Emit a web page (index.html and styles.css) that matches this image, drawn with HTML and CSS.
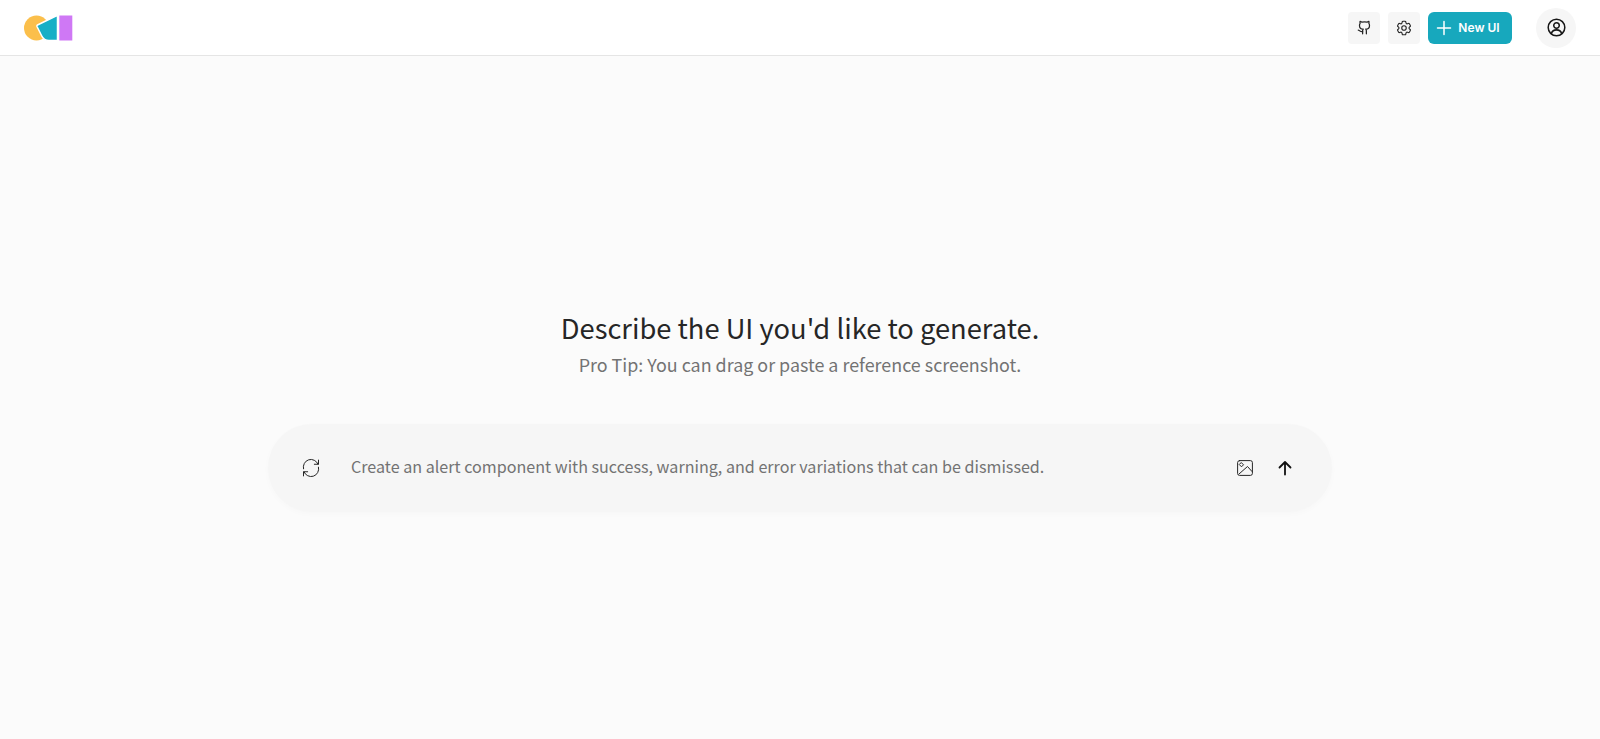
FILE: index.html
```html
<!DOCTYPE html>
<html lang="en">
<head>
  <meta charset="UTF-8">
  <meta name="viewport" content="width=device-width, initial-scale=1.0">
  <title>OpenUI</title>
  <link rel="stylesheet" href="styles.css">
</head>
<body>
  <!-- Header -->
  <header class="header">
    <svg class="logo" width="51" height="26" viewBox="0 0 51 26">
      <circle class="logo-circle" cx="14.500" cy="13" r="12.500"/>
      <path class="logo-wedge" d="M15.500 10 34.500 0.800Q35.500 0.400 35.500 1.500V25.500H27Q22 25.500 19.500 20.500L15 11.500Q14.700 10.500 15.500 10Z"/>
      <rect class="logo-bar" x="37.300" y="0.500" width="13" height="25"/>
    </svg>
    <div class="header-actions">
      <button class="icon-btn" aria-label="GitHub">
        <svg width="15" height="15" viewBox="0 0 24 24" fill="none" stroke="currentColor" stroke-width="2" stroke-linecap="round" stroke-linejoin="round">
          <path d="M15 22v-4a4.800 4.800 0 0 0-1-3.500c3 0 6-2 6-5.500.08-1.250-.27-2.480-1-3.500.28-1.150.28-2.350 0-3.500 0 0-1 0-3 1.500-2.640-.5-5.360-.5-8 0C6 2 5 2 5 2c-.3 1.150-.3 2.350 0 3.500A5.400 5.400 0 0 0 4 9c0 3.500 3 5.500 6 5.500-.39.49-.68 1.050-.85 1.650-.17.600-.22 1.230-.15 1.850v4"/>
          <path d="M9 18c-4.510 2-5-2-7-2"/>
        </svg>
      </button>
      <button class="icon-btn" aria-label="Settings">
        <svg width="18" height="18" viewBox="0 0 24 24" fill="none" stroke="currentColor" stroke-width="1.500" stroke-linecap="round" stroke-linejoin="round">
          <path d="M9.594 3.940c.09-.542.560-.940 1.110-.940h2.593c.550 0 1.020.398 1.110.940l.213 1.281c.063.374.313.686.645.870.074.040.147.083.220.127.325.196.720.257 1.075.124l1.217-.456a1.125 1.125 0 0 1 1.370.490l1.296 2.247a1.125 1.125 0 0 1-.260 1.431l-1.003.827c-.293.241-.438.613-.430.992a7.723 7.723 0 0 1 0 .255c-.008.378.137.750.430.991l1.004.827c.424.350.534.955.260 1.430l-1.298 2.247a1.125 1.125 0 0 1-1.369.491l-1.217-.456c-.355-.133-.750-.072-1.076.124a6.470 6.470 0 0 1-.220.128c-.331.183-.581.495-.644.869l-.213 1.281c-.090.543-.560.940-1.110.940h-2.594c-.550 0-1.019-.398-1.110-.940l-.213-1.281c-.062-.374-.312-.686-.644-.870a6.520 6.520 0 0 1-.220-.127c-.325-.196-.720-.257-1.076-.124l-1.217.456a1.125 1.125 0 0 1-1.369-.490l-1.297-2.247a1.125 1.125 0 0 1 .260-1.431l1.004-.827c.292-.240.437-.613.430-.991a6.932 6.932 0 0 1 0-.255c.007-.380-.138-.751-.430-.992l-1.004-.827a1.125 1.125 0 0 1-.260-1.430l1.297-2.247a1.125 1.125 0 0 1 1.370-.491l1.216.456c.356.133.751.072 1.076-.124.072-.044.146-.086.220-.128.332-.183.582-.495.644-.869l.214-1.280Z"/>
          <path d="M15 12a3 3 0 1 1-6 0 3 3 0 0 1 6 0Z"/>
        </svg>
      </button>
      <button class="new-btn">
        <svg width="16" height="16" viewBox="0 0 16 16" fill="none" stroke="currentColor" stroke-width="1.500" stroke-linecap="round">
          <path d="M8 1.500v13M1.500 8h13"/>
        </svg>
        New UI
      </button>
      <button class="avatar-btn" aria-label="Account">
        <svg width="19" height="19" viewBox="0 0 24 24" fill="none" stroke="currentColor" stroke-width="1.900" stroke-linecap="round" stroke-linejoin="round">
          <circle cx="12" cy="12" r="10.500"/>
          <circle cx="12" cy="9.500" r="3.500"/>
          <path d="M5.500 19.500c1-3 3.500-4.500 6.500-4.500s5.500 1.500 6.500 4.500"/>
        </svg>
      </button>
    </div>
  </header>

  <!-- Main Content -->
  <main class="content">
    <h1 class="title">Describe the UI you'd like to generate.</h1>
    <p class="subtitle">Pro Tip: You can drag or paste a reference screenshot.</p>

    <div class="prompt">
      <svg class="prompt-refresh" width="20" height="20" viewBox="0 0 24 24" fill="none" stroke="currentColor" stroke-width="1.200" stroke-linecap="round" stroke-linejoin="round">
        <path d="M21 2.500v5h-5"/>
        <path d="M3 21.500v-5h5"/>
        <path d="M3 13A9.200 9.200 0 0 1 20.500 7.500"/>
        <path d="M21 11A9.200 9.200 0 0 1 3.500 16.500"/>
      </svg>
      <div class="prompt-text">Create an alert component with success, warning, and error variations that can be dismissed.</div>
      <div class="prompt-actions">
        <svg width="18" height="18" viewBox="0 0 18 18" fill="none" stroke="currentColor" stroke-width="1" stroke-linecap="round" stroke-linejoin="round">
          <rect x="1.600" y="1.600" width="14.800" height="14.800" rx="2"/>
          <path d="M3 15 11.500 7.500l4.500 5"/>
          <path d="M5.500 3.800 7.500 5.800 5.500 7.800 3.500 5.800Z"/>
        </svg>
        <svg width="18" height="18" viewBox="0 0 18 18" fill="none" stroke="#111" stroke-width="1.800" stroke-linecap="round" stroke-linejoin="round">
          <path d="M9 15.500V3M3.500 8.500 9 3l5.500 5.500"/>
        </svg>
      </div>
    </div>
  </main>
</body>
</html>
```

FILE: styles.css
```css
body {
  font-family: "Noto Sans CJK SC", "Noto Sans", sans-serif;
  margin: 0;
  padding: 0;
  background-color: #fbfbfb;
  color: #262626;
  height: 739px;
  overflow: hidden;
}

.header {
  height: 56px;
  box-sizing: border-box;
  background-color: #fff;
  border-bottom: 1px solid #e5e5e5;
  display: flex;
  align-items: center;
  justify-content: space-between;
  padding: 0 24px 0 22px;
}

.logo {
  display: block;
}

.logo-circle {
  fill: #fbbf4b;
}

.logo-wedge {
  fill: #17afc6;
  stroke: #fff;
  stroke-width: 1.5px;
}

.logo-bar {
  fill: #cf78f5;
}

.header-actions {
  display: flex;
  align-items: center;
}

button {
  border: none;
  padding: 0;
  cursor: pointer;
  display: flex;
  align-items: center;
  justify-content: center;
}

.icon-btn {
  width: 32px;
  height: 32px;
  margin-right: 8px;
  border-radius: 4px;
  background-color: #f6f6f6;
  color: #262626;
}

.new-btn {
  width: 84px;
  height: 32px;
  gap: 6px;
  padding-right: 4px;
  border-radius: 6px;
  background-color: #17a8bd;
  color: #fff;
  font-family: Inter, sans-serif;
  font-size: 12px;
  font-weight: 600;
}

.avatar-btn {
  width: 40px;
  height: 40px;
  margin-left: 24px;
  border-radius: 50%;
  background-color: #f6f6f6;
  color: #171717;
}

.content {
  display: flex;
  flex-direction: column;
  align-items: center;
  padding-top: 253px;
}

.title {
  margin: 0;
  font-size: 27.3px;
  line-height: 36px;
  font-weight: 400;
  color: #262626;
}

.subtitle {
  margin: 5px 0 0;
  font-size: 17.9px;
  line-height: 28px;
  color: #737373;
}

.prompt {
  margin-top: 46px;
  width: 1064px;
  height: 88px;
  box-sizing: border-box;
  display: flex;
  align-items: center;
  padding: 0 28px 0 33px;
  border-radius: 44px;
  background-color: #f6f6f6;
  box-shadow: 0 2px 6px rgba(0, 0, 0, 0.02);
}

.prompt-refresh {
  flex: none;
  color: #262626;
}

.prompt-text {
  flex: 1;
  margin-left: 30px;
  padding-bottom: 5px;
  font-size: 16.12px;
  line-height: 28px;
  color: #737373;
}

.prompt-actions {
  display: flex;
  align-items: center;
  gap: 22px;
  margin-right: 10px;
  color: #262626;
}
```
